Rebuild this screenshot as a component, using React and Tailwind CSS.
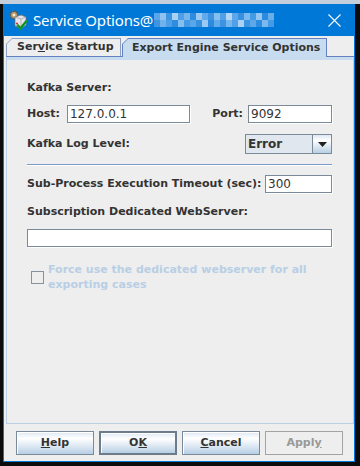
import React from 'react'

const blurColors = [
  '#5aa6ea', '#8ec3f1', '#3d95e2', '#a9d1f4', '#4d9fe7', '#76b6ee', '#2f8ddf', '#9acaf2',
  '#61aaeb', '#3b93e1', '#85bff0', '#4fa0e8', '#b3d6f5', '#5ea8ea', '#3790e0', '#7cb9ef',
  '#449be5', '#93c6f1', '#2c8bdf', '#68adec',
]
const blurColors2 = [
  '#3d95e2', '#6fb2ec', '#4d9fe7', '#2f8ddf', '#85bff0', '#449be5', '#5aa6ea', '#3790e0',
  '#9acaf2', '#2c8bdf', '#61aaeb', '#3b93e1', '#76b6ee', '#4fa0e8', '#a9d1f4', '#3d95e2',
  '#5ea8ea', '#2f8ddf', '#7cb9ef', '#449be5',
]

function AppIcon() {
  return (
    <svg width="20" height="20" viewBox="0 0 20 20">
      {/* gear */}
      <circle cx="6" cy="5" r="3.6" fill="#b9a27a" stroke="#6b5a3c" strokeWidth="0.8" />
      <circle cx="6" cy="5" r="1.3" fill="#f4ecd8" />
      <path d="M6 0.5v1.6M6 8v1.6M1.5 5h1.6M9 5h1.6M2.8 1.8l1.1 1.1M8.1 7.1l1.1 1.1M2.8 8.2l1.1-1.1M8.1 2.9l1.1-1.1" stroke="#6b5a3c" strokeWidth="1.2" />
      {/* box */}
      <path d="M7 7l6-2 5 2v8l-5 3-6-2z" fill="#e6e6ea" stroke="#77777f" strokeWidth="0.8" />
      <path d="M7 7l6 2 5-2M13 9v9" stroke="#9a9aa3" strokeWidth="0.7" fill="none" />
      <circle cx="9" cy="13.5" r="1.1" fill="#d33" />
      {/* check */}
      <path d="M10 15.5l2.5 2.8L18 11.5" stroke="#19a51f" strokeWidth="2.4" fill="none" strokeLinecap="square" />
      <path d="M10 15.5l2.5 2.8L18 11.5" stroke="#063" strokeWidth="0.6" fill="none" />
    </svg>
  )
}

function TextField({ value = '', className = '' }) {
  return (
    <div
      className={`h-[18px] bg-white border border-[#7a8a99] shadow-[1px_1px_0_#ffffff] flex items-center pl-[2px] text-[12px] text-[#333333] ${className}`}
    >
      {value}
    </div>
  )
}

function Tab({ selected, children, className = '' }) {
  return (
    <div
      className={`${selected ? 'bg-[#6382bf] h-[19px] -mb-px relative' : 'bg-[#8aa1c4] h-[18px]'} pt-px px-px [clip-path:polygon(6px_0,100%_0,100%_100%,0_100%,0_6px)] ${className}`}
    >
      <div
        className={`${selected ? 'bg-[#c8dcf0] pl-[9px]' : 'bg-[#eeeeee] pl-[10px]'} h-full flex items-center [clip-path:polygon(5px_0,100%_0,100%_100%,0_100%,0_5px)] font-bold text-[11px] text-[#333333]`}
      >
        {children}
      </div>
    </div>
  )
}

function Button({ children, primary, disabled }) {
  if (disabled) {
    return (
      <div className="w-[78px] h-[24px] border border-[#a3a3a3] bg-[#eeeeee] flex items-center justify-center font-bold text-[11px] text-[#999999]">
        {children}
      </div>
    )
  }
  return (
    <div
      className={`w-[78px] h-[24px] ${primary ? 'border-2 border-[#6c7c8b]' : 'border border-[#7a8a99]'} bg-[linear-gradient(to_bottom,#dde8f3,#ffffff_30%,#b8cfe5)] shadow-[inset_1px_1px_0_#ffffff] flex items-center justify-center font-bold text-[11px] text-[#333333]`}
    >
      {children}
    </div>
  )
}

export default function App() {
  return (
    <div
      className="w-[360px] h-[466px] bg-[#0b0b0b] overflow-hidden"
      style={{ fontFamily: '"DejaVu Sans", "Liberation Sans", sans-serif' }}
    >
      {/* background window strip */}
      <div className="h-[4px] bg-[#c5cfdc]" />
      <div className="ml-[3px] w-[352px]">
        {/* Title bar */}
        <div className="h-[32px] bg-[#0078d7] flex items-center pl-[5px] pr-[14px]">
          <AppIcon />
          <span
            className="ml-[5px] text-white text-[15px] tracking-[-0.2px]"
            style={{ fontFamily: '"Noto Sans", "Liberation Sans", sans-serif' }}
          >
            Service Options@
          </span>
          <div className="flex flex-col ml-[1px]">
            <div className="flex">
              {blurColors.map((c, i) => (
                <div key={i} className="w-[6px] h-[7px]" style={{ backgroundColor: c }} />
              ))}
            </div>
            <div className="flex">
              {blurColors2.map((c, i) => (
                <div key={i} className="w-[6px] h-[7px]" style={{ backgroundColor: c }} />
              ))}
            </div>
          </div>
          <div className="flex-1" />
          <svg width="13" height="13" viewBox="0 0 13 13">
            <path d="M0.5 0.5l12 12M12.5 0.5l-12 12" stroke="#ffffff" strokeWidth="1.1" />
          </svg>
        </div>

        {/* Body */}
        <div className="h-[426px] bg-[#eeeeee] border-x border-b border-[#0078d7] flex flex-col">
          <div className="ml-[2px] mt-[2px] flex-1 flex flex-col">
            {/* Tabs */}
            <div className="h-[19px] flex items-end border-b border-[#6382bf]">
              <Tab className="w-[115px]">
                <span>
                  Ser<span className="underline">v</span>ice Startup
                </span>
              </Tab>
              <Tab selected className="w-[205px] ml-px">
                Export Engine Service Options
              </Tab>
            </div>

            {/* Panel */}
            <div className="flex-1 border-t-[3px] border-t-[#c8dcf0] border-x border-b border-x-[#b8cfe5] border-b-[#b8cfe5] pl-[20px] pr-[21px] flex flex-col font-bold text-[11px] text-[#333333]">
              <div className="mt-[21px] h-[14px] leading-[14px]">Kafka Server:</div>

              <div className="mt-[10px] h-[18px] flex items-center">
                <span>Host:</span>
                <TextField value="127.0.0.1" className="ml-[7px] w-[123px] font-normal" />
                <div className="flex-1" />
                <span>Port:</span>
                <TextField value="9092" className="ml-[5px] w-[84px] font-normal" />
              </div>

              <div className="mt-[11px] h-[20px] flex items-center">
                <span>Kafka Log Level:</span>
                <div className="flex-1" />
                <div className="w-[87px] h-[20px] border border-[#7a8a99] flex">
                  <div className="flex-1 bg-[#e1e7ee] flex items-center pl-[2px] text-[12px]">Error</div>
                  <div className="w-[19px] border-l border-[#7a8a99] bg-[linear-gradient(to_bottom,#dde8f3,#ffffff_30%,#b8cfe5)] flex items-center justify-center">
                    <svg width="9" height="5" viewBox="0 0 9 5">
                      <path d="M0 0h9L4.5 5z" fill="#222222" />
                    </svg>
                  </div>
                </div>
              </div>

              <div className="mt-[10px] h-px bg-[#7a9acc]" />
              <div className="h-px bg-white" />

              <div className="mt-[9px] h-[18px] flex items-center">
                <span>Sub-Process Execution Timeout (sec):</span>
                <div className="flex-1" />
                <TextField value="300" className="w-[67px] font-normal" />
              </div>

              <div className="mt-[12px] h-[14px] leading-[14px]">Subscription Dedicated WebServer:</div>

              <TextField className="mt-[10px] w-full" />

              <div className="mt-[15px] flex items-center">
                <div className="ml-[4px] w-[13px] h-[13px] border border-[#8593a0] bg-[#eeeeee]" />
                <div className="ml-[4px] leading-[15px] text-[#b8cfe5]">
                  Force use the dedicated webserver for all
                  <br />
                  exporting cases
                </div>
              </div>
            </div>
          </div>

          {/* Buttons */}
          <div className="h-[37px] pt-[7px] pl-[12px] flex gap-[5px]">
            <Button>
              <span className="underline">H</span>elp
            </Button>
            <Button primary>
              O<span className="underline">K</span>
            </Button>
            <Button>
              <span className="underline">C</span>ancel
            </Button>
            <Button disabled>
              Appl<span className="underline">y</span>
            </Button>
          </div>
        </div>
      </div>
    </div>
  )
}
